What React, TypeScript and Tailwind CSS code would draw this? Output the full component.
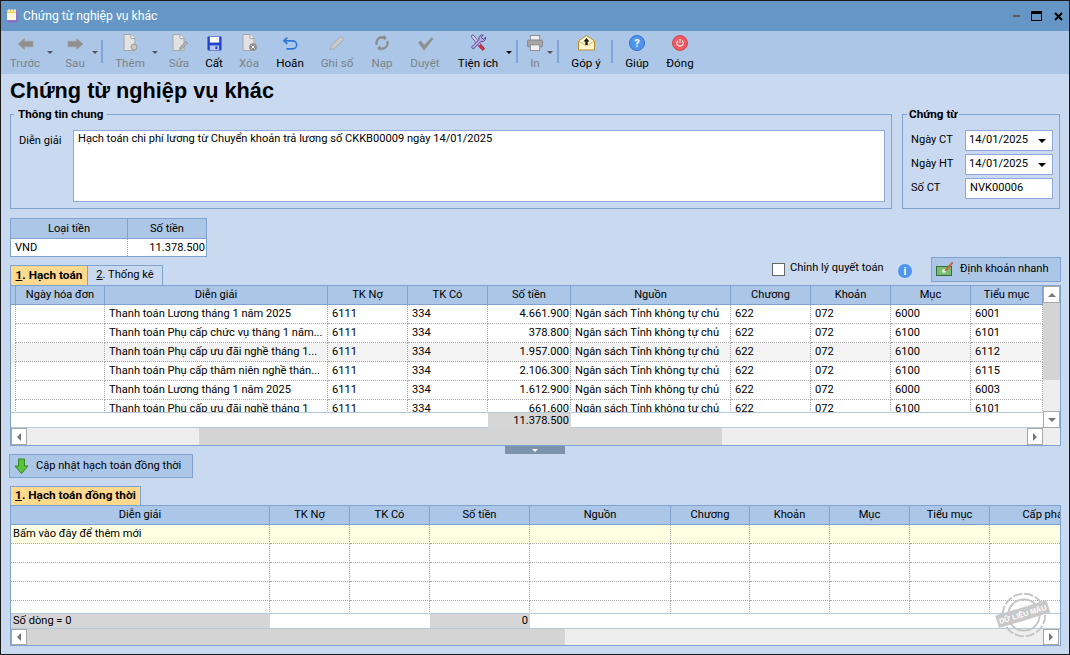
import type { ReactNode } from "react";

const FONT = "[font-family:Roboto,'Liberation_Sans',Arial,sans-serif]";

function ArrowIcon({ flip }: { flip?: boolean }) {
  return (
    <svg width="17" height="14" viewBox="0 0 18 14" className={flip ? "-scale-x-100" : ""}>
      <path d="M1 7 8 1v3h9v6H8v3z" fill="#8f8f8f" stroke="#a3a3a3" strokeWidth="0.6" />
    </svg>
  );
}

function DocBase({ children }: { children?: ReactNode }) {
  return (
    <svg width="20" height="17" viewBox="0 0 20 17">
      <path d="M4 .5h7l4 4v12H4z" fill="#e2e2e2" stroke="#a6a6a6" />
      <path d="M11 .5v4h4" fill="#f6f6f6" stroke="#a6a6a6" />
      {children}
    </svg>
  );
}

function FloppyIcon() {
  return (
    <svg width="15" height="15" viewBox="0 0 16 16">
      <rect x="0.5" y="0.5" width="15" height="15" rx="1" fill="#1f3fd0" />
      <rect x="3" y="1" width="10" height="6" fill="#ffffff" />
      <rect x="3" y="10" width="10" height="5" fill="#b7c4ee" />
      <rect x="9" y="11" width="2" height="3" fill="#1f3fd0" />
    </svg>
  );
}

function UndoIcon() {
  return (
    <svg width="16" height="15" viewBox="0 0 18 16" fill="none" stroke="#2a78d8" strokeWidth="1.8">
      <path d="M6 1.500 2 5l4 3.500" />
      <path d="M2.500 5H12a4 4 0 0 1 0 9H5" />
    </svg>
  );
}

function PencilIcon() {
  return (
    <svg width="16" height="16" viewBox="0 0 18 18">
      <path d="M13 1.500 16.500 5 6 15.500 1.500 16.500 2.500 12z" fill="#c9c9c9" stroke="#a2a2a2" />
    </svg>
  );
}

function ReloadIcon() {
  return (
    <svg width="16" height="16" viewBox="0 0 18 18" fill="none" stroke="#8d8d8d" strokeWidth="2.600">
      <path d="M3 11A6.500 6.500 0 0 1 9 2.500c1.200 0 2 .3 3 .9" />
      <path d="M15 7a6.500 6.500 0 0 1-6 8.500c-1.200 0-2-.3-3-.9" />
      <path d="M11 0l3.500 3.500L11 6.500z" fill="#8d8d8d" stroke="none" />
      <path d="M7 11.500 3.500 14.500 7 18z" fill="#8d8d8d" stroke="none" />
    </svg>
  );
}

function CheckIcon() {
  return (
    <svg width="17" height="14" viewBox="0 0 18 15">
      <path d="M1 6l3-2 3.500 4.500L15.500 0.500 17.500 2 7.500 14.500z" fill="#8f8f8f" />
    </svg>
  );
}

function ToolsIcon() {
  return (
    <svg width="17" height="17" viewBox="0 0 18 18">
      <path d="M2 1 4 1.500 10 9l5 6-1.500 1.500-6-6L1.500 3z" fill="#d8d0ea" stroke="#5a4a94" strokeWidth="0.9" />
      <path d="M16.500 3.500a4 4 0 0 1-5 4.500L4 15.500a1.600 1.600 0 0 1-2-2L9.500 6a4 4 0 0 1 4.500-5L12 3.500 14 5.500z" fill="#b8a8e0" stroke="#4a3a88" strokeWidth="0.9" />
      <path d="M11 11l4.500 4.500-2 2L9 13z" fill="#e03040" stroke="#98202c" strokeWidth="0.7" />
    </svg>
  );
}

function PrinterIcon() {
  return (
    <svg width="16" height="16" viewBox="0 0 17 17">
      <rect x="3.500" y="0.500" width="10" height="5" fill="#eeeeee" stroke="#8c8c8c" />
      <rect x="0.500" y="5.500" width="16" height="7" rx="1" fill="#a6a6a6" stroke="#868686" />
      <rect x="3.500" y="10.500" width="10" height="6" fill="#f2f2f2" stroke="#8c8c8c" />
    </svg>
  );
}

function MailIcon() {
  return (
    <svg width="17" height="16" viewBox="0 0 17 16">
      <path d="M.5 6 8.500.5 16.500 6v9H.5z" fill="#fff6cf" stroke="#b88a2c" />
      <path d="M.5 6l8 5 8-5" fill="none" stroke="#d9b866" />
      <path d="M8.500 3 11.500 6.500H9.700V10H7.300V6.500H5.500z" fill="#1a1a1a" />
    </svg>
  );
}

function HelpIcon() {
  return (
    <div className="flex h-[16px] w-[16px] items-center justify-center rounded-full border border-[#2f6fd0] bg-[#4f94ee] text-[11px] font-bold leading-none text-white">
      ?
    </div>
  );
}

function PowerIcon() {
  return (
    <svg width="16" height="16" viewBox="0 0 16 16">
      <circle cx="8" cy="8" r="7.500" fill="#ef5b62" stroke="#d9434b" />
      <path d="M5.800 5.600a3.200 3.200 0 1 0 4.400 0" fill="none" stroke="#ffffff" strokeWidth="1.100" />
      <path d="M8 3.800v4" stroke="#ffffff" strokeWidth="1.100" />
    </svg>
  );
}

function ToolBtn({ icon, label, className, off }: { icon: ReactNode; label: string; className: string; off?: boolean }) {
  return (
    <div className={`flex h-full shrink-0 flex-col items-center ${className}`}>
      <div className="flex h-[20px] items-end justify-center">{icon}</div>
      <div className={`mt-[5px] whitespace-nowrap leading-[14px] ${off ? "text-[#7d838a]" : "text-black"}`}>{label}</div>
    </div>
  );
}

function Caret({ className, off }: { className: string; off?: boolean }) {
  return (
    <div className={`flex h-full w-[8px] shrink-0 justify-center pt-[20px] ${className}`}>
      <div className={`h-0 w-0 border-x-[3px] border-t-[3px] border-x-transparent ${off ? "border-t-[#555555]" : "border-t-black"}`} />
    </div>
  );
}

function Sep({ className }: { className: string }) {
  return <div className={`mt-[9px] h-[23px] w-[2px] shrink-0 bg-[#7ea6d8] ${className}`} />;
}

function Toolbar() {
  return (
    <div className="flex h-[43px] shrink-0 bg-[#abc6e6] pl-[3px] text-[11.6px]">
      <ToolBtn off className="w-[42px]" icon={<ArrowIcon />} label="Trước" />
      <Caret off className="" />
      <ToolBtn off className="ml-[5px] w-[32px]" icon={<ArrowIcon flip />} label="Sau" />
      <Caret off className="" />
      <Sep className="ml-[2px]" />
      <ToolBtn off className="ml-[11px] w-[32px]" icon={<DocBase><circle cx="14" cy="13" r="3" fill="#c8c8c8" stroke="#999999" /></DocBase>} label="Thêm" />
      <Caret off className="ml-[5px]" />
      <ToolBtn off className="ml-[6px] w-[28px]" icon={<DocBase><path d="M17 7l2 2-6 6-2.500.7.500-2.500z" fill="#b0b0b0" stroke="#8f8f8f" strokeWidth="0.6" /></DocBase>} label="Sửa" />
      <ToolBtn className="ml-[7px] w-[28px]" icon={<FloppyIcon />} label="Cất" />
      <ToolBtn off className="ml-[7px] w-[28px]" icon={<DocBase><circle cx="14" cy="13" r="3.800" fill="#8d8d8d" /><path d="M12.500 11.500l3 3m0-3l-3 3" stroke="#ffffff" /></DocBase>} label="Xóa" />
      <ToolBtn className="ml-[11px] w-[32px]" icon={<UndoIcon />} label="Hoãn" />
      <ToolBtn off className="ml-[13px] w-[36px]" icon={<PencilIcon />} label="Ghi sổ" />
      <ToolBtn off className="ml-[13px] w-[28px]" icon={<ReloadIcon />} label="Nạp" />
      <ToolBtn off className="ml-[13px] w-[32px]" icon={<CheckIcon />} label="Duyệt" />
      <ToolBtn className="ml-[15px] w-[44px]" icon={<ToolsIcon />} label="Tiện ích" />
      <Caret className="ml-[5px]" />
      <Sep className="ml-[3px]" />
      <ToolBtn off className="ml-[7px] w-[20px]" icon={<PrinterIcon />} label="In" />
      <Caret off className="ml-[1px]" />
      <Sep className="ml-[3px]" />
      <ToolBtn className="ml-[9px] w-[36px]" icon={<MailIcon />} label="Góp ý" />
      <Sep className="ml-[7px]" />
      <ToolBtn className="ml-[8px] w-[32px]" icon={<HelpIcon />} label="Giúp" />
      <ToolBtn className="ml-[11px] w-[32px]" icon={<PowerIcon />} label="Đóng" />
    </div>
  );
}

function DateField({ value }: { value: string }) {
  return (
    <div className="flex h-[21px] w-[88px] items-center justify-between border border-[#8fa8e0] bg-white pl-[3px] pr-[6px]">
      <span>{value}</span>
      <div className="h-0 w-0 border-x-[4px] border-t-[4px] border-x-transparent border-t-black" />
    </div>
  );
}

function ScrollBtn({ dir, className }: { dir: "left" | "right" | "up" | "down"; className: string }) {
  const arrow = {
    left: "border-y-[4px] border-r-[4px] border-y-transparent border-r-[#777777]",
    right: "border-y-[4px] border-l-[4px] border-y-transparent border-l-[#777777]",
    up: "border-x-[4px] border-b-[4px] border-x-transparent border-b-[#777777]",
    down: "border-x-[4px] border-t-[4px] border-x-transparent border-t-[#777777]",
  }[dir];
  return (
    <div className={`flex shrink-0 items-center justify-center border border-[#a8a8a8] bg-white ${className}`}>
      <div className={`h-0 w-0 ${arrow}`} />
    </div>
  );
}

const G1_COLS = "grid grid-cols-[5px_89px_223px_80px_80px_83px_160px_80px_80px_80px_72px]";
const G2_COLS = "grid w-[1089px] grid-cols-[259px_80px_80px_100px_141px_79px_80px_80px_80px_110px]";

const G1_HEAD = ["", "Ngày hóa đơn", "Diễn giải", "TK Nợ", "TK Có", "Số tiền", "Nguồn", "Chương", "Khoản", "Mục", "Tiểu mục"];
const G2_HEAD = ["Diễn giải", "TK Nợ", "TK Có", "Số tiền", "Nguồn", "Chương", "Khoản", "Mục", "Tiểu mục", "Cấp phát"];

const NGUON = "Ngân sách Tỉnh không tự chủ";
const G1_ROWS = [
  ["Thanh toán Lương tháng 1 năm 2025", "4.661.900", "6000", "6001"],
  ["Thanh toán Phụ cấp chức vụ tháng 1 năm...", "378.800", "6100", "6101"],
  ["Thanh toán Phụ cấp ưu đãi nghề tháng 1...", "1.957.000", "6100", "6112"],
  ["Thanh toán Phụ cấp thâm niên nghề thán...", "2.106.300", "6100", "6115"],
  ["Thanh toán Lương tháng 1 năm 2025", "1.612.900", "6000", "6003"],
  ["Thanh toán Phụ cấp ưu đãi nghề tháng 1", "661.600", "6100", "6101"],
];

function HeadCell({ children }: { children?: ReactNode }) {
  return (
    <div className="flex items-center justify-center overflow-hidden whitespace-nowrap border-r border-[#7fa3d1]">
      {children}
    </div>
  );
}

function Cell({ children, right }: { children?: ReactNode; right?: boolean }) {
  return (
    <div className={`overflow-hidden whitespace-nowrap border-b border-r border-dotted border-[#a9a9a9] pl-[4px] pr-[1px] leading-[18px] ${right ? "text-right" : ""}`}>
      {children}
    </div>
  );
}

function Grid1() {
  return (
    <div className="flex h-[161px] shrink-0 flex-col border border-[#7fa3d1] bg-white">
      <div className="flex h-[142px] shrink-0">
        <div className="flex w-[1032px] shrink-0 flex-col">
          <div className={`${G1_COLS} h-[19px] shrink-0 border-b border-[#7fa3d1] bg-[#abc6e6]`}>
            {G1_HEAD.map((h, i) => (
              <HeadCell key={i}>{h}</HeadCell>
            ))}
          </div>
          <div className="h-[107px] shrink-0 overflow-hidden">
            {G1_ROWS.map((r, i) => (
              <div key={i} className={`${G1_COLS} h-[19px] ${i === 2 ? "bg-[#f3f3f3]" : ""}`}>
                <div className="border-r border-dotted border-[#a9a9a9]" />
                <Cell />
                <Cell>{r[0]}</Cell>
                <Cell>6111</Cell>
                <Cell>334</Cell>
                <Cell right>{r[1]}</Cell>
                <Cell>{NGUON}</Cell>
                <Cell>622</Cell>
                <Cell>072</Cell>
                <Cell>{r[2]}</Cell>
                <Cell>{r[3]}</Cell>
              </div>
            ))}
          </div>
          <div className={`${G1_COLS} h-[16px] shrink-0 border-y border-[#b9c8d8]`}>
            <div className="col-span-5" />
            <div className="bg-[#d6d6d6] pr-[2px] text-right leading-[15px]">11.378.500</div>
          </div>
        </div>
        <div className="flex w-[17px] shrink-0 flex-col bg-[#eeeeee]">
          <ScrollBtn dir="up" className="h-[17px] w-[17px]" />
          <div className="h-[77px] shrink-0 bg-[#d4d4d4]" />
          <div className="flex-1" />
          <ScrollBtn dir="down" className="h-[17px] w-[17px]" />
        </div>
      </div>
      <div className="flex h-[17px] shrink-0 bg-[#eeeeee]">
        <ScrollBtn dir="left" className="h-[17px] w-[16px]" />
        <div className="w-[1000px] shrink-0 pl-[172px]">
          <div className="h-full w-[523px] bg-[#d4d4d4]" />
        </div>
        <ScrollBtn dir="right" className="h-[17px] w-[16px]" />
      </div>
    </div>
  );
}

function Grid2() {
  return (
    <div className="relative flex h-[141px] shrink-0 flex-col overflow-hidden border border-[#7fa3d1] bg-white">
      <div className={`${G2_COLS} h-[19px] shrink-0 border-b border-[#7fa3d1] bg-[#abc6e6]`}>
        {G2_HEAD.map((h) => (
          <HeadCell key={h}>{h}</HeadCell>
        ))}
      </div>
      <div className="h-[88px] shrink-0 overflow-hidden">
        {[0, 1, 2, 3, 4].map((i) => (
          <div key={i} className={`${G2_COLS} h-[19px] ${i === 0 ? "bg-[#ffffe1]" : ""}`}>
            {G2_HEAD.map((h, j) => (
              <div key={h} className="overflow-hidden whitespace-nowrap border-b border-r border-dotted border-[#a9a9a9] pl-[2px] leading-[18px]">
                {i === 0 && j === 0 ? "Bấm vào đây để thêm mới" : ""}
              </div>
            ))}
          </div>
        ))}
      </div>
      <div className={`${G2_COLS} h-[16px] shrink-0 border-y border-[#b9c8d8] bg-white`}>
        <div className="bg-[#d6d6d6] pl-[2px] leading-[14px]">Số dòng = 0</div>
        <div className="col-span-2" />
        <div className="bg-[#d6d6d6] pr-[2px] text-right leading-[14px]">0</div>
      </div>
      <div className="flex h-[16px] shrink-0 bg-[#eeeeee]">
        <ScrollBtn dir="left" className="h-[16px] w-[16px]" />
        <div className="w-[1016px] shrink-0">
          <div className="h-full w-[538px] bg-[#d4d4d4]" />
        </div>
        <ScrollBtn dir="right" className="h-[16px] w-[16px]" />
      </div>
    </div>
  );
}

function Watermark() {
  return (
    <svg width="56" height="48" viewBox="0 0 60 52" className="absolute bottom-[15px] right-[18px]">
      <g fill="none" stroke="#c4c4c4" strokeWidth="2">
        <circle cx="31" cy="26" r="23" strokeDasharray="10 2" />
        <circle cx="31" cy="26" r="17" />
      </g>
      <g transform="rotate(-17 30 26)">
        <rect x="1" y="18" width="58" height="14" fill="#c8c8c8" />
        <text x="30" y="28" textAnchor="middle" fontSize="8" fontWeight="700" fill="#ffffff" fontFamily="Liberation Sans">
          DỮ LIỆU MẪU
        </text>
      </g>
    </svg>
  );
}

export default function App() {
  return (
    <div className={`relative flex h-[655px] w-[1070px] flex-col overflow-hidden border border-[#1a1a1a] bg-[#c9daf0] text-[11.1px] text-black ${FONT}`}>
      <div className="flex h-[30px] shrink-0 items-center bg-[#6596c6] pl-[4px] pr-[6px]">
        <svg width="14" height="16" viewBox="0 0 14 16">
          <path d="M2 3h10l1 11-10 1z" fill="#8a70c8" />
          <rect x="2" y="2" width="9" height="10" fill="#fff7d8" />
          <rect x="2" y="2" width="9" height="3" fill="#f2d24a" />
          <path d="M4 1v3M7 1v3M10 1v3" stroke="#ffffff" />
        </svg>
        <span className="ml-[4px] text-[12.2px] text-white">Chứng từ nghiệp vụ khác</span>
        <div className="ml-auto flex items-center">
          <div className="h-[2px] w-[7px] bg-[#5a5a5a]" />
          <div className="ml-[11px] h-[10px] w-[11px] border border-black border-t-[3px]" />
          <svg width="9" height="9" viewBox="0 0 9 9" className="ml-[12px]">
            <path d="M1 1l7 7M8 1 1 8" stroke="#000000" strokeWidth="2" />
          </svg>
        </div>
      </div>
      <Toolbar />

      <div className="flex min-h-0 flex-1 flex-col pl-[9px] pr-[8px]">
        <h1 className="mt-[2px] h-[29px] shrink-0 font-['Liberation_Sans'] text-[21.7px] font-bold leading-[29px]">Chứng từ nghiệp vụ khác</h1>

        <div className="mt-[2px] flex h-[102px] shrink-0 gap-[10px]">
          <fieldset className="w-[882px] shrink-0 border border-[#7fa3d1]">
            <legend className="ml-[3px] px-[4px] text-[11.7px] font-bold leading-[15px]">Thông tin chung</legend>
            <div className="flex pl-[8px] pt-[8px]">
              <span className="w-[54px] shrink-0 pt-[4px] leading-[14px]">Diễn giải</span>
              <div className="h-[72px] w-[812px] border border-[#8fa8e0] bg-white px-[4px] py-[1px] leading-[14px]">
                Hạch toán chi phí lương từ Chuyển khoản trả lương số CKKB00009 ngày 14/01/2025
              </div>
            </div>
          </fieldset>
          <fieldset className="w-[158px] shrink-0 border border-[#7fa3d1]">
            <legend className="ml-[4px] px-[2px] text-[11.7px] font-bold leading-[15px]">Chứng từ</legend>
            <div className="flex flex-col gap-[3px] pl-[8px] pt-[8px]">
              <div className="flex items-center">
                <span className="w-[54px]">Ngày CT</span>
                <DateField value="14/01/2025" />
              </div>
              <div className="flex items-center">
                <span className="w-[54px]">Ngày HT</span>
                <DateField value="14/01/2025" />
              </div>
              <div className="flex items-center">
                <span className="w-[54px]">Số CT</span>
                <div className="flex h-[21px] w-[88px] items-center border border-[#8fa8e0] bg-white pl-[4px]">NVK00006</div>
              </div>
            </div>
          </fieldset>
        </div>

        <div className="mt-[9px] grid h-[39px] w-[197px] shrink-0 grid-cols-[117px_78px] grid-rows-[20px_17px] border border-[#7fa3d1] bg-white">
          <div className="flex items-center justify-center border-b border-r border-[#7fa3d1] bg-[#abc6e6] pt-[1px]">Loại tiền</div>
          <div className="flex items-center justify-center border-b border-[#7fa3d1] bg-[#abc6e6] pt-[1px]">Số tiền</div>
          <div className="border-r border-dotted border-[#a9a9a9] px-[4px] pt-[1px] leading-[16px]">VND</div>
          <div className="pr-[1px] pt-[1px] text-right leading-[16px]">11.378.500</div>
        </div>

        <div className="flex h-[28px] w-[1052px] shrink-0 items-end">
          <div className="flex h-[20px] w-[78px] shrink-0 items-center justify-center border border-b-0 border-[#7fa3d1] bg-[#fed98e] text-[11.8px] font-bold">
            <span><span className="underline">1</span>. Hạch toán</span>
          </div>
          <div className="flex h-[20px] w-[75px] shrink-0 items-center justify-center border border-b-0 border-l-0 border-[#7fa3d1]">
            <span><span className="underline">2</span>. Thống kê</span>
          </div>
          <div className="mb-[9px] ml-[609px] h-[13px] w-[13px] shrink-0 border border-[#666666] bg-white" />
          <span className="mb-[8px] ml-[5px] w-[95px] shrink-0 whitespace-nowrap">Chỉnh lý quyết toán</span>
          <div className="mb-[7px] ml-[13px] flex h-[14px] w-[14px] shrink-0 items-center justify-center rounded-full bg-[#4f94ee] text-[11px] font-bold leading-none text-white">
            i
          </div>
          <div className="mb-[3px] ml-[19px] flex h-[25px] w-[130px] shrink-0 items-center border border-[#7fa3d1] bg-[#abc6e6] pl-[4px]">
            <svg width="17" height="15" viewBox="0 0 17 15">
              <rect x="0.500" y="4.500" width="15" height="9" fill="#7dbb72" stroke="#2f6f3a" />
              <circle cx="8" cy="9" r="2" fill="#dff0d8" />
              <path d="M16 0l1 1-6 7-2 1 .7-2z" fill="#e8663c" stroke="#9a3a1c" strokeWidth="0.4" />
            </svg>
            <span className="ml-[7px] whitespace-nowrap">Định khoản nhanh</span>
          </div>
        </div>

        <Grid1 />

        <div className="ml-[495px] flex h-[8px] w-[60px] shrink-0 items-center justify-center bg-[#7b93ad]">
          <div className="h-0 w-0 border-x-[3px] border-t-[3px] border-x-transparent border-t-white" />
        </div>

        <div className="-ml-[1px] flex h-[24px] w-[184px] shrink-0 items-center border border-[#7fa3d1] bg-[#abc6e6] pl-[4px]">
          <svg width="15" height="16" viewBox="0 0 15 16">
            <path d="M4.500 1h6v7H14l-6.500 7.500L1 8h3.500z" fill="#5cc23c" stroke="#2e8a1f" />
          </svg>
          <span className="ml-[7px] whitespace-nowrap">Cập nhật hạch toán đồng thời</span>
        </div>

        <div className="mt-[8px] flex h-[19px] w-[131px] shrink-0 items-center justify-center whitespace-nowrap border border-b-0 border-[#7fa3d1] bg-[#fed98e] text-[11.8px] font-bold">
          <span><span className="underline">1</span>. Hạch toán đồng thời</span>
        </div>

        <Grid2 />
      </div>
      <Watermark />
    </div>
  );
}
